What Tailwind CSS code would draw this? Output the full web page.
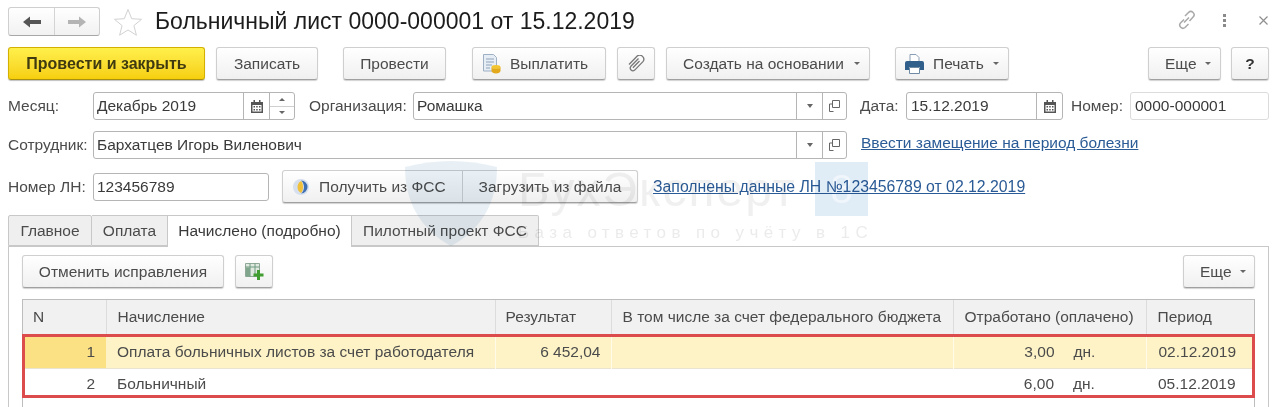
<!DOCTYPE html>
<html lang="ru">
<head>
  <meta charset="UTF-8">
  <title>Больничный лист</title>
  <script src="https://cdn.jsdelivr.net/npm/@tailwindcss/browser@4"></script>
</head>
<body class="bg-white font-['Liberation_Sans',Arial,sans-serif] text-[15.5px] text-[#4b4b4b]">
<div class="relative w-[1272px] h-[407px] overflow-hidden">

  <!-- Title bar -->
  <div class="flex items-start pt-[7px] pl-[8px] h-[36px]">
    <div class="flex w-[92px] h-[29px] rounded-[3px] border border-[#cfcfcf] border-b-[#a8a8a8] bg-linear-to-b from-white to-[#f1f1f1]">
      <div class="w-[46px] flex items-center justify-center border-r border-[#d4d4d4]">
        <svg width="18" height="12" viewBox="0 0 18 12"><path d="M0 6l7-5.500V4h11v4H7v3.500z" fill="#555"/></svg>
      </div>
      <div class="flex-1 flex items-center justify-center">
        <svg width="18" height="12" viewBox="0 0 18 12"><path d="M18 6l-7-5.500V4H0v4h11v3.500z" fill="#b4b4b4"/></svg>
      </div>
    </div>
    <svg class="ml-[13px] mt-[1px]" width="30" height="29" viewBox="0 0 30 29"><path d="M15 1.500l3.700 9.200 9.800.6-7.600 6.300 2.500 9.600L15 22l-8.400 5.200 2.500-9.600L1.500 11.300l9.800-.6z" fill="#fff" stroke="#d2d2d2"/></svg>
    <h1 class="ml-[12px] text-[23px] leading-[29px] text-[#1c1c1c]">Больничный лист 0000-000001 от 15.12.2019</h1>
    <div class="ml-auto flex items-center h-[26px] pr-[4px]">
      <svg width="22" height="20" viewBox="0 0 22 20" fill="none" stroke="#a9a9a9" stroke-width="1.500"><path d="M9 6l3.500-3.500a3.200 3.200 0 0 1 4.600 4.500L13.500 11M12.500 14L9 17.500A3.200 3.200 0 0 1 4.500 13L8 9.500M8 12.500l5-5"/></svg>
      <div class="ml-[25px] flex flex-col gap-[2px]">
        <span class="block w-[3px] h-[3px] bg-[#8a8a8a]"></span>
        <span class="block w-[3px] h-[3px] bg-[#8a8a8a]"></span>
        <span class="block w-[3px] h-[3px] bg-[#8a8a8a]"></span>
      </div>
      <svg class="ml-[33px]" width="9" height="9" viewBox="0 0 9 9" stroke="#8f8f8f" stroke-width="1.200"><path d="M.5.500l8 8M8.500.500l-8 8"/></svg>
    </div>
  </div>

  <!-- Command bar -->
  <div class="flex mt-[11px] pl-[8px] h-[33px]">
    <button class="w-[197px] rounded-[3px] border border-[#d4b000] border-b-[#a98f10] bg-linear-to-b from-[#fff04a] to-[#f6cf0a] shadow-[0_1px_1px_rgba(0,0,0,.25)] font-bold text-[16px] text-[#3f3a10]">Провести и закрыть</button>
    <button class="ml-[11px] w-[102px] rounded-[3px] border border-[#cfcfcf] border-b-[#a0a0a0] bg-linear-to-b from-white to-[#f0f0f0] shadow-[0_1px_1px_rgba(0,0,0,.18)]">Записать</button>
    <button class="ml-[25px] w-[103px] rounded-[3px] border border-[#cfcfcf] border-b-[#a0a0a0] bg-linear-to-b from-white to-[#f0f0f0] shadow-[0_1px_1px_rgba(0,0,0,.18)]">Провести</button>
    <button class="ml-[26px] w-[134px] pl-[10px] flex items-center gap-[9px] rounded-[3px] border border-[#cfcfcf] border-b-[#a0a0a0] bg-linear-to-b from-white to-[#f0f0f0] shadow-[0_1px_1px_rgba(0,0,0,.18)]">
      <svg width="18" height="20" viewBox="0 0 18 20"><path d="M.5.500h10l3 3V17H.5z" fill="#e6edf5" stroke="#9db0c4"/><path d="M3 5h8M3 8h8M3 11h6M3 14h4" stroke="#8ea3ba"/><ellipse cx="13" cy="13" rx="4.500" ry="2" fill="#f3c531"/><path d="M8.500 13v4c0 1.100 2 2.500 4.500 2.500s4.500-1.400 4.500-2.500v-4c0 1.100-2 2-4.500 2s-4.500-.9-4.500-2z" fill="#e2a91d"/></svg>
      <span>Выплатить</span>
    </button>
    <button class="ml-[11px] w-[38px] flex items-center justify-center rounded-[3px] border border-[#cfcfcf] border-b-[#a0a0a0] bg-linear-to-b from-white to-[#f0f0f0] shadow-[0_1px_1px_rgba(0,0,0,.18)]">
      <svg width="18" height="18" viewBox="0 0 18 18" fill="none" stroke="#777" stroke-width="1.300"><path d="M11.500 3.500l-7.600 7.800a2.700 2.700 0 0 0 3.800 3.800l8-8.200a4 4 0 0 0-5.700-5.600L2 9.500M12.500 6l-6.600 6.800"/></svg>
    </button>
    <button class="ml-[11px] w-[204px] pl-[16px] flex items-center gap-[10px] rounded-[3px] border border-[#cfcfcf] border-b-[#a0a0a0] bg-linear-to-b from-white to-[#f0f0f0] shadow-[0_1px_1px_rgba(0,0,0,.18)]">
      <span>Создать на основании</span>
      <span class="w-0 h-0 border-x-[3px] border-x-transparent border-t-[3px] border-t-[#666]"></span>
    </button>
    <button class="ml-[25px] w-[114px] pl-[9px] flex items-center gap-[9px] rounded-[3px] border border-[#cfcfcf] border-b-[#a0a0a0] bg-linear-to-b from-white to-[#f0f0f0] shadow-[0_1px_1px_rgba(0,0,0,.18)]">
      <svg width="19" height="20" viewBox="0 0 19 20"><path d="M5 .500h6l3 3V8H5z" fill="#fff" stroke="#8a9fb5"/><path d="M0 9a2 2 0 0 1 2-2h15a2 2 0 0 1 2 2v7h-4v-3H4v3H0z" fill="#2f5f8a"/><path d="M4.500 13.500h10v6h-10z" fill="#fff" stroke="#6f8aa5"/></svg>
      <span>Печать</span>
      <span class="w-0 h-0 border-x-[3px] border-x-transparent border-t-[3px] border-t-[#666]"></span>
    </button>
    <button class="ml-[139px] w-[73px] pl-[16px] flex items-center gap-[8px] rounded-[3px] border border-[#cfcfcf] border-b-[#a0a0a0] bg-linear-to-b from-white to-[#f0f0f0] shadow-[0_1px_1px_rgba(0,0,0,.18)]">
      <span>Еще</span>
      <span class="w-0 h-0 border-x-[3px] border-x-transparent border-t-[3px] border-t-[#666]"></span>
    </button>
    <button class="ml-[10px] w-[38px] rounded-[3px] border border-[#cfcfcf] border-b-[#a0a0a0] bg-linear-to-b from-white to-[#f0f0f0] shadow-[0_1px_1px_rgba(0,0,0,.18)] font-bold text-[#333]">?</button>
  </div>

  <!-- Месяц / Организация / Дата / Номер -->
  <div class="flex items-center mt-[12px] pl-[8px] h-[28px]">
    <span class="w-[85px]">Месяц:</span>
    <div class="w-[202px] h-[28px] flex rounded-[3px] border border-[#b5b5b5] text-[#3a3a3a]">
      <span class="w-[149px] pl-[3px] leading-[26px]">Декабрь 2019</span>
      <span class="w-[26px] flex items-center justify-center border-l border-[#b5b5b5]">
        <svg width="12" height="13" viewBox="0 0 12 13"><path d="M0 2h12v11H0z" fill="#555"/><path d="M2.500 0h1.500v3H2.500zM8 0h1.500v3H8z" fill="#555"/><path d="M1.500 5h9v6.500h-9z" fill="#fff"/><path d="M2.500 6h1.500v1.500H2.500zM5.200 6h1.500v1.500H5.200zM8 6h1.500v1.500H8zM2.500 9h1.500v1.500H2.500zM5.200 9h1.500v1.500H5.200zM8 9h1.500v1.500H8z" fill="#555"/></svg>
      </span>
      <span class="flex-1 flex flex-col border-l border-[#b5b5b5]">
        <span class="flex-1 flex items-center justify-center border-b border-[#cfcfcf]"><span class="w-0 h-0 border-x-[3px] border-x-transparent border-b-[3px] border-b-[#666]"></span></span>
        <span class="flex-1 flex items-center justify-center"><span class="w-0 h-0 border-x-[3px] border-x-transparent border-t-[3px] border-t-[#666]"></span></span>
      </span>
    </div>
    <span class="ml-[14px] w-[104px]">Организация:</span>
    <div class="w-[434px] h-[28px] flex rounded-[3px] border border-[#b5b5b5] text-[#3a3a3a]">
      <span class="w-[382px] pl-[3px] leading-[26px]">Ромашка</span>
      <span class="w-[26px] flex items-center justify-center border-l border-[#b5b5b5]"><span class="w-0 h-0 border-x-[3px] border-x-transparent border-t-[4px] border-t-[#666]"></span></span>
      <span class="flex-1 flex items-center justify-center border-l border-[#b5b5b5]">
        <svg width="11" height="12" viewBox="0 0 11 12" fill="none" stroke="#666"><path d="M3.500.500h7v7h-7zM3.500 4H.500v7.500M.500 11.500h4"/></svg>
      </span>
    </div>
    <span class="ml-[13px] w-[46px]">Дата:</span>
    <div class="w-[157px] h-[28px] flex rounded-[3px] border border-[#b5b5b5] text-[#3a3a3a]">
      <span class="w-[129px] pl-[4px] leading-[26px]">15.12.2019</span>
      <span class="flex-1 flex items-center justify-center border-l border-[#b5b5b5]">
        <svg width="12" height="13" viewBox="0 0 12 13"><path d="M0 2h12v11H0z" fill="#555"/><path d="M2.500 0h1.500v3H2.500zM8 0h1.500v3H8z" fill="#555"/><path d="M1.500 5h9v6.500h-9z" fill="#fff"/><path d="M2.500 6h1.500v1.500H2.500zM5.200 6h1.500v1.500H5.200zM8 6h1.500v1.500H8zM2.500 9h1.500v1.500H2.500zM5.200 9h1.500v1.500H5.200zM8 9h1.500v1.500H8z" fill="#555"/></svg>
      </span>
    </div>
    <span class="ml-[8px] w-[59px]">Номер:</span>
    <div class="w-[139px] h-[28px] pl-[4px] leading-[26px] rounded-[3px] border border-[#dcdcdc] text-[#3a3a3a]">0000-000001</div>
  </div>

  <!-- Сотрудник -->
  <div class="flex items-center mt-[11px] pl-[8px] h-[28px]">
    <span class="w-[85px]">Сотрудник:</span>
    <div class="w-[754px] h-[28px] flex rounded-[3px] border border-[#b5b5b5] text-[#3a3a3a]">
      <span class="w-[702px] pl-[3px] leading-[26px]">Бархатцев Игорь Виленович</span>
      <span class="w-[26px] flex items-center justify-center border-l border-[#b5b5b5]"><span class="w-0 h-0 border-x-[3px] border-x-transparent border-t-[4px] border-t-[#666]"></span></span>
      <span class="flex-1 flex items-center justify-center border-l border-[#b5b5b5]">
        <svg width="11" height="12" viewBox="0 0 11 12" fill="none" stroke="#666"><path d="M3.500.500h7v7h-7zM3.500 4H.500v7.500M.500 11.500h4"/></svg>
      </span>
    </div>
    <a class="ml-[14px] -mt-[4px] text-[#2b5b96] underline">Ввести замещение на период болезни</a>
  </div>

  <!-- Номер ЛН -->
  <div class="flex items-center mt-[11px] pl-[8px] h-[33px]">
    <span class="w-[85px]">Номер ЛН:</span>
    <div class="w-[176px] h-[28px] pl-[3px] leading-[26px] rounded-[3px] border border-[#b5b5b5] text-[#3a3a3a]">123456789</div>
    <div class="ml-[13px] w-[356px] h-[33px] flex rounded-[3px] border border-[#cfcfcf] border-b-[#a0a0a0] bg-linear-to-b from-white to-[#f0f0f0] shadow-[0_1px_1px_rgba(0,0,0,.18)]">
      <span class="w-[180px] pl-[9px] flex items-center gap-[9px] border-r border-[#cfcfcf]">
        <svg width="18" height="18" viewBox="0 0 18 18"><circle cx="9" cy="9" r="8" fill="#d5dfee"/><path d="M9 2.500a6.500 6.500 0 0 1 0 13c2-1.500 3-4 3-6.500S11 4 9 2.500z" fill="#3f6fb0"/><path d="M9 3C6.500 4.500 5.500 6.500 5.500 9S6.500 13.500 9 15c1.500-1.500 2-4 2-6s-.5-4.500-2-6z" fill="#f0c03a"/></svg>
        <span>Получить из ФСС</span>
      </span>
      <span class="flex-1 text-center leading-[31px]">Загрузить из файла</span>
    </div>
    <a class="ml-[15px] text-[15.8px] text-[#2b5b96] underline">Заполнены данные ЛН №123456789 от 02.12.2019</a>
  </div>

  <!-- Tabs -->
  <div class="flex mt-[12px] ml-[8px] h-[32px] relative">
    <div class="w-[84px] h-[31px] text-center leading-[30px] bg-[#efefef] border border-[#c8c8c8] rounded-t-[2px]">Главное</div>
    <div class="w-[76px] h-[31px] text-center leading-[30px] bg-[#efefef] border border-l-0 border-[#c8c8c8]">Оплата</div>
    <div class="w-[184px] h-[32px] text-center leading-[30px] bg-white border border-b-0 border-l-0 border-[#c8c8c8] text-[#3a3a3a]">Начислено (подробно)</div>
    <div class="w-[187px] h-[31px] text-center leading-[30px] bg-[#efefef] border border-l-0 border-[#c8c8c8] rounded-tr-[2px]">Пилотный проект ФСС</div>
  </div>

  <!-- Panel -->
  <div class="ml-[8px] -mt-[1px] w-[1261px] h-[200px] border border-[#c8c8c8] px-[13px] pt-[8px]">
    <div class="flex h-[33px]">
      <button class="w-[202px] rounded-[3px] border border-[#cfcfcf] border-b-[#a0a0a0] bg-linear-to-b from-white to-[#f0f0f0] shadow-[0_1px_1px_rgba(0,0,0,.18)]">Отменить исправления</button>
      <button class="ml-[11px] w-[38px] flex items-center justify-center rounded-[3px] border border-[#cfcfcf] border-b-[#a0a0a0] bg-linear-to-b from-white to-[#f0f0f0] shadow-[0_1px_1px_rgba(0,0,0,.18)]">
        <svg width="19" height="19" viewBox="0 0 19 19"><path d="M.500 1.500h14v13H.500z" fill="#dfe9e0" stroke="#8fa897"/><path d="M.500 5h14M5 1.500v13M10 1.500v13" stroke="#6f9a80"/><path d="M1 5.500h4v9H1z" fill="#7fa58d"/><path d="M12 8h3v3.500h3.500v3H15V18h-3v-3.500H8.500v-3H12z" fill="#3f9e2f"/></svg>
      </button>
      <button class="ml-auto w-[72px] pl-[16px] flex items-center gap-[8px] rounded-[3px] border border-[#cfcfcf] border-b-[#a0a0a0] bg-linear-to-b from-white to-[#f0f0f0] shadow-[0_1px_1px_rgba(0,0,0,.18)]">
        <span>Еще</span>
        <span class="w-0 h-0 border-x-[3px] border-x-transparent border-t-[3px] border-t-[#666]"></span>
      </button>
    </div>

    <!-- Table -->
    <div class="relative mt-[11px] w-[1233px] h-[120px] border-x border-t border-[#bdbdbd]">
      <table class="w-full table-fixed border-collapse">
        <colgroup>
          <col class="w-[83px]"><col class="w-[389px]"><col class="w-[116px]"><col class="w-[342px]"><col class="w-[193px]"><col>
        </colgroup>
        <thead>
          <tr class="h-[34px] bg-[#f1f1f1] text-left">
            <th class="font-normal pl-[10px] pb-[1px] border-r border-[#dcdcdc]">N</th>
            <th class="font-normal pl-[11px] pb-[1px] border-r border-[#dcdcdc]">Начисление</th>
            <th class="font-normal pl-[10px] pb-[1px] border-r border-[#dcdcdc]">Результат</th>
            <th class="font-normal pl-[11px] pb-[1px] border-r border-[#dcdcdc]">В том числе за счет федерального бюджета</th>
            <th class="font-normal pl-[11px] pb-[1px] border-r border-[#dcdcdc]">Отработано (оплачено)</th>
            <th class="font-normal pl-[11px] pb-[1px]">Период</th>
          </tr>
        </thead>
        <tbody>
          <tr class="h-[34px] bg-[#fdf3c6] border-b border-[#e9e4cf]">
            <td class="bg-[#fbe183] text-right pr-[11px] pt-[1px]">1</td>
            <td class="pl-[11px] pt-[1px] border-r border-[#fffbe8]">Оплата больничных листов за счет работодателя</td>
            <td class="text-right pr-[10px] pt-[1px] border-r border-[#fffbe8]">6 452,04</td>
            <td class="border-r border-[#fffbe8]"></td>
            <td class="pt-[1px] border-r border-[#fffbe8]"><div class="flex"><span class="w-[101px] text-right">3,00</span><span class="ml-[19px]">дн.</span></div></td>
            <td class="pl-[12px] pt-[1px]">02.12.2019</td>
          </tr>
          <tr class="h-[32px]">
            <td class="text-right pr-[11px] pb-[1px]">2</td>
            <td class="pl-[11px] pb-[1px]">Больничный</td>
            <td></td>
            <td></td>
            <td class="pb-[1px]"><div class="flex"><span class="w-[101px] text-right">6,00</span><span class="ml-[19px]">дн.</span></div></td>
            <td class="pl-[12px] pb-[1px]">05.12.2019</td>
          </tr>
        </tbody>
      </table>
      <!-- red highlight over the rows -->
      <div class="absolute left-[-1px] right-[-1px] top-[34px] h-[64px] border-[3px] border-[#dc4c4c]"></div>
    </div>
  </div>

  <!-- Watermark over the form -->
  <div class="absolute left-[405px] top-[160px] w-[465px] h-[86px] pointer-events-none mix-blend-multiply">
    <svg class="absolute left-0 top-[1px]" width="92" height="85" viewBox="0 0 92 85"><path d="M0 6C30-2 62-2 92 6c0 35-15 62-46 79C15 68 0 41 0 6z" fill="#bcd3e4" fill-opacity=".35"/></svg>
    <span class="absolute left-[113px] top-[3px] text-[48px] tracking-[2px] leading-[54px] text-[#9a9a9a]/15">БухЭксперт</span>
    <span class="absolute left-[410px] top-[2px] w-[53px] h-[54px] bg-[#bcd6ea]/45 flex items-center justify-center text-[40px] text-white/50">8</span>
    <span class="absolute left-[113px] top-[62px] text-[17px] tracking-[5.400px] leading-[22px] whitespace-nowrap text-[#9a9a9a]/20">База ответов по учёту в 1С</span>
  </div>
</div>
</body>
</html>
